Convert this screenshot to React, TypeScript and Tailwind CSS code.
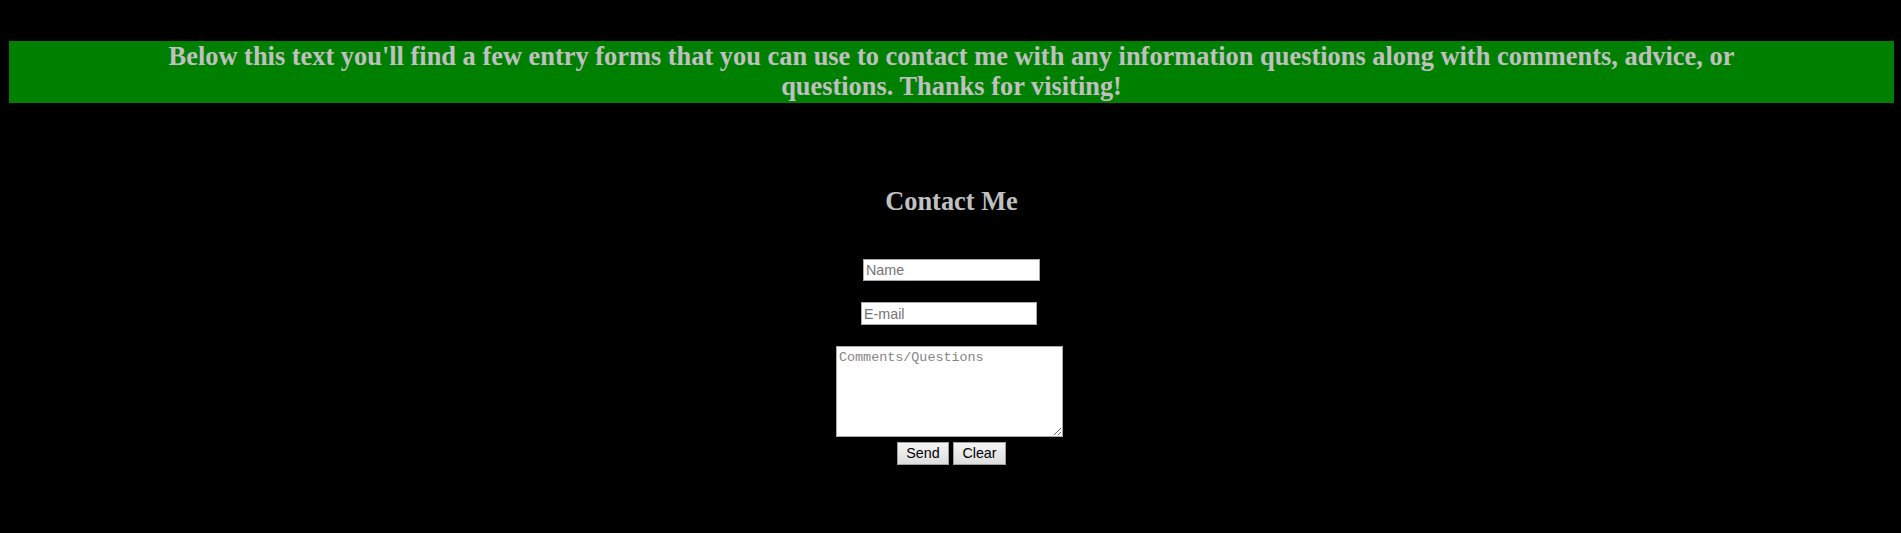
import React from "react";

export default function App() {
  return (
    <div className="min-h-[533px] w-full bg-black pl-[9px] pr-[7px] pt-[41px] font-['Liberation_Serif',serif]">
      <div className="bg-[#008000] pb-[2px]">
        <h1 className="px-[150px] text-center font-['Liberation_Serif',serif] text-[26.4px] font-bold leading-[30px] text-[#c0c0c0]">
          Below this text you'll find a few entry forms that you can use to contact me with any information questions along with comments, advice, or questions. Thanks for visiting!
        </h1>
      </div>
      <h2 className="mt-[83px] text-center font-['Liberation_Serif',serif] text-[26.4px] font-bold leading-[30px] text-[#c0c0c0]">
        Contact Me
      </h2>
      <form className="flex flex-col items-center" onSubmit={(e) => e.preventDefault()}>
        <input
          type="text"
          placeholder="Name"
          className="mt-[43px] box-border h-[22px] w-[177px] border border-[#a9a9a9] bg-white px-[2px] font-['Liberation_Sans',Arial,sans-serif] text-[14.3px] text-black outline-none placeholder:text-[#757575]"
        />
        <input
          type="text"
          placeholder="E-mail"
          className="mr-[5px] mt-[21px] box-border h-[23px] w-[176px] border border-[#a9a9a9] bg-white px-[2px] font-['Liberation_Sans',Arial,sans-serif] text-[14.3px] text-black outline-none placeholder:text-[#757575]"
        />
        <textarea
          placeholder="Comments/Questions"
          className="mr-[4px] mt-[21px] box-border h-[91px] w-[227px] border border-[#a9a9a9] bg-white px-[2px] py-[3px] font-['Liberation_Mono','DejaVu_Sans_Mono',monospace] text-[13.4px] leading-[16px] text-black outline-none placeholder:text-[#858585]"
        />
        <div className="mt-[5px] flex gap-[4px]">
          <button
            type="submit"
            className="box-border h-[23px] w-[52px] border border-[#a0a0a0] bg-gradient-to-b from-[#f4f4f4] to-[#dedede] font-['Liberation_Sans',Arial,sans-serif] text-[14.3px] text-black"
          >
            Send
          </button>
          <button
            type="reset"
            className="box-border h-[23px] w-[53px] border border-[#a0a0a0] bg-gradient-to-b from-[#f4f4f4] to-[#dedede] font-['Liberation_Sans',Arial,sans-serif] text-[14.3px] text-black"
          >
            Clear
          </button>
        </div>
      </form>
    </div>
  );
}
